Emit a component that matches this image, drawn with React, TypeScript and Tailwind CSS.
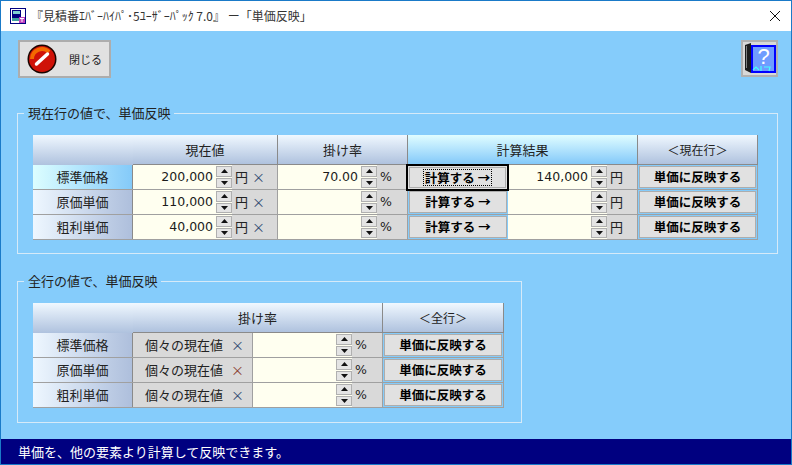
const HEAD = "bg-linear-to-b from-[#f0f8ff] to-[#afc2de]";
const HEAD_ACTIVE = "bg-linear-to-b from-[#e0fdff] to-[#83c9f9]";
const NUM_FONT = "font-['DejaVu_Sans','Noto_Sans_CJK_JP',sans-serif] text-[12.5px]";

const ROWS = [
  { name: "標準価格", price: "200,000", rate: "70.00", result: "140,000", active: true },
  { name: "原価単価", price: "110,000", rate: "", result: "", active: false },
  { name: "粗利単価", price: "40,000", rate: "", result: "", active: false },
];

function AppIcon() {
  return (
    <svg width="16" height="16" viewBox="0 0 16 16" className="shrink-0">
      <rect x="0.5" y="0.5" width="15" height="15" fill="#fff" stroke="#000080" />
      <rect x="2" y="2" width="9" height="8" fill="#000080" />
      <rect x="3" y="3" width="7" height="3" fill="#7fd0d0" />
      <rect x="2" y="10" width="9" height="3" fill="#40a0a0" />
      <rect x="9" y="9" width="6" height="6" fill="#c040c0" />
      <path d="M10 10.5h4M12 10.5v3.5" stroke="#fff" />
    </svg>
  );
}

function StopIcon() {
  return (
    <svg width="30" height="30" viewBox="0 0 30 30">
      <circle cx="15" cy="15" r="14.5" fill="#1a0500" />
      <circle cx="15" cy="15" r="13" fill="#cf1208" />
      <path d="M5 15a10 10 0 0 1 17-7" fill="none" stroke="#f46a00" strokeWidth="4" />
      <path d="M9.5 20 20.5 10" stroke="#fff" strokeWidth="3.5" strokeLinecap="round" />
    </svg>
  );
}

function HelpIcon() {
  return (
    <div className="flex h-[37px] w-[37px] items-center justify-center border-2 border-[#b0b0b0] bg-[#d8d8d8]">
      <svg width="33" height="33" viewBox="0 0 33 33">
        <path d="M2 3l6-2v30l-6-3z" fill="#1c1c1c" />
        <rect x="3" y="4" width="1" height="22" fill="#808080" />
        <rect x="8" y="3" width="25" height="28" fill="#0000ff" />
        <rect x="10" y="5" width="21" height="24" fill="#6f9cff" />
        <text x="20.5" y="22" textAnchor="middle" fontSize="22" fontFamily="Liberation Sans" fill="#fff">?</text>
        <path d="M10 28l3-3 3 3M18 24v5M21 25h6l-1 4" fill="none" stroke="#4ff" strokeWidth="1.2" />
      </svg>
    </div>
  );
}

function Spinner() {
  return (
    <div className="flex w-[16px] shrink-0 flex-col gap-px self-stretch py-px">
      {["up", "down"].map((dir) => (
        <div key={dir} className="flex flex-1 items-center justify-center border border-[#b0b0b0] bg-[#e4e4e4]">
          <svg width="7" height="4" viewBox="0 0 7 4">
            <path d={dir === "up" ? "M3.5 0 7 4H0z" : "M0 0h7L3.5 4z"} fill="#111" />
          </svg>
        </div>
      ))}
    </div>
  );
}

function NumberField({ value, width }: { value: string; width: string }) {
  return (
    <div className={`flex h-full shrink-0 items-center bg-[#fffff0] ${width}`}>
      <span className={`flex-1 pr-[3px] text-right text-[#1b1b1b] ${NUM_FONT}`}>{value}</span>
      <Spinner />
    </div>
  );
}

function ActionButton({ label, focused }: { label: string; focused?: boolean }) {
  if (focused) {
    return (
      <div className="z-10 -my-[2px] -ml-[2px] flex h-[27px] w-[103px] shrink-0 items-center justify-center border-2 border-black bg-[#e1e1e1] p-px">
        <div className="flex h-full w-full items-center justify-center border border-[#adadad]">
          <span className="border border-dotted border-black px-px text-[12.5px] leading-[15px] font-bold text-black">{label}</span>
        </div>
      </div>
    );
  }
  return (
    <div className="flex h-full flex-1 items-center justify-center bg-[#85ccfb] px-[1px] py-[1px]">
      <div className="flex h-full w-full items-center justify-center border border-[#adadad] bg-[#e1e1e1] text-[12.5px] font-bold text-black">
        {label}
      </div>
    </div>
  );
}

function RowLabel({ name, active }: { name: string; active?: boolean }) {
  return (
    <div
      className={`flex w-[100px] shrink-0 items-center justify-center border-r border-r-[#8a8a8a] text-[13px] text-[#222] ${
        active
          ? "bg-linear-to-r from-[#dcfeff] to-[#84caf9]"
          : "bg-linear-to-r from-[#eef7ff] to-[#aebfdc]"
      }`}
    >
      {name}
    </div>
  );
}

function CurrentRowTable() {
  return (
    <div className="w-[725px] text-[#222]">
      <div className="flex h-[30px] text-[13px]">
        <div className={`w-[100px] ${HEAD}`} />
        <div className={`flex w-[145px] items-center justify-center border-r border-b border-[#8a8a8a] ${HEAD}`}>現在値</div>
        <div className={`flex w-[130px] items-center justify-center border-r border-b border-[#8a8a8a] ${HEAD}`}>掛け率</div>
        <div className={`flex w-[230px] items-center justify-center border-r border-b border-[#8a8a8a] ${HEAD_ACTIVE}`}>計算結果</div>
        <div className={`flex w-[120px] items-center justify-center border-r border-b border-[#8a8a8a] text-[12px] ${HEAD}`}>＜現在行＞</div>
      </div>
      {ROWS.map((row) => (
        <div key={row.name} className="flex h-[25px] border-b border-[#a0a0a0]">
          <RowLabel name={row.name} active={row.active} />
          <div className="flex w-[145px] shrink-0 items-center border-r border-[#a0a0a0] bg-[#d9d9d9]">
            <NumberField value={row.price} width="w-[99px]" />
            <span className="w-[45px] pl-[3px] text-[13px] whitespace-nowrap">
              円<span className="ml-1 text-[#2f4a70]">×</span>
            </span>
          </div>
          <div className="flex w-[130px] shrink-0 items-center border-r border-[#a0a0a0] bg-[#d9d9d9]">
            <NumberField value={row.rate} width="w-[99px]" />
            <span className={`pl-[3px] ${NUM_FONT}`}>%</span>
          </div>
          <div className="flex w-[230px] shrink-0 items-center border-r border-[#a0a0a0] bg-[#d9d9d9]">
            <div className="flex h-full w-[100px] shrink-0 items-center">
              <ActionButton label="計算する →" focused={row.active} />
            </div>
            <NumberField value={row.result} width="w-[99px]" />
            <span className="pl-[3px] text-[13px]">円</span>
          </div>
          <div className="flex w-[120px] shrink-0 items-center border-r border-[#a0a0a0]">
            <ActionButton label="単価に反映する" />
          </div>
        </div>
      ))}
    </div>
  );
}

function AllRowsTable() {
  return (
    <div className="w-[471px] text-[#222]">
      <div className="flex h-[30px] text-[13px]">
        <div className={`w-[100px] ${HEAD}`} />
        <div className={`flex w-[250px] items-center justify-center border-r border-b border-[#8a8a8a] ${HEAD}`}>掛け率</div>
        <div className={`flex w-[121px] items-center justify-center border-r border-b border-[#8a8a8a] text-[12px] ${HEAD}`}>＜全行＞</div>
      </div>
      {ROWS.map((row, i) => (
        <div key={row.name} className="flex h-[25px] border-b border-[#a0a0a0]">
          <RowLabel name={row.name} />
          <div className="flex w-[250px] shrink-0 items-center border-r border-[#a0a0a0] bg-[#d9d9d9]">
            <span className="w-[120px] shrink-0 self-stretch border-r border-[#a0a0a0] pl-[12px] text-[13px] leading-[23px] whitespace-nowrap">
              個々の現在値<span className={`ml-[8px] ${i === 1 ? "text-[#8a4030]" : "text-[#2f4a70]"}`}>×</span>
            </span>
            <NumberField value="" width="w-[99px]" />
            <span className={`pl-[3px] ${NUM_FONT}`}>%</span>
          </div>
          <div className="flex w-[121px] shrink-0 items-center border-r border-[#a0a0a0]">
            <ActionButton label="単価に反映する" />
          </div>
        </div>
      ))}
    </div>
  );
}

function GroupBox({ title, width, children }: { title: string; width: string; children: React.ReactNode }) {
  return (
    <fieldset className={`border border-[#d6eaf8] ${width}`}>
      <legend className="ml-[6px] px-[4px] text-[13px] leading-[18px] text-[#222]">{title}</legend>
      <div className="pl-[15px]">{children}</div>
    </fieldset>
  );
}

export default function App() {
  return (
    <div className="flex h-[465px] w-[792px] flex-col overflow-hidden border border-[#1a7ac8] bg-[#85ccfb] font-['Noto_Sans_CJK_JP',sans-serif]">
      <header className="flex h-[30px] shrink-0 items-center bg-white pl-[9px]">
        <AppIcon />
        <span className="ml-[5px] flex-1 text-[12px] whitespace-nowrap text-[#333]">『見積番ｴﾊﾞｰﾊｲﾊﾟ･5ﾕｰｻﾞｰﾊﾟｯｸ 7.0』 ー「単価反映」</span>
        <svg width="12" height="12" viewBox="0 0 12 12" className="mr-[10px]">
          <path d="M1 1l10 10M11 1 1 11" stroke="#111" strokeWidth="1" />
        </svg>
      </header>

      <main className="flex flex-1 flex-col pt-[9px] pl-[16px]">
        <div className="flex items-start justify-between pr-[13px]">
          <button className="ml-px flex h-[38px] w-[93px] items-center border-2 border-[#adadad] bg-[#e1e1e1] pl-[7px] text-[11px] text-[#222]">
            <StopIcon />
            <span className="ml-[12px]">閉じる</span>
          </button>
          <HelpIcon />
        </div>

        <div className="mt-[26px]">
          <GroupBox title="現在行の値で、単価反映" width="w-[761px] h-[150px]">
            <div className="mt-[13px]">
              <CurrentRowTable />
            </div>
          </GroupBox>
        </div>

        <div className="mt-[18px]">
          <GroupBox title="全行の値で、単価反映" width="w-[505px] h-[151px]">
            <div className="mt-[13px]">
              <AllRowsTable />
            </div>
          </GroupBox>
        </div>
      </main>

      <footer className="flex h-[25px] shrink-0 items-center bg-[#000080] pl-[17px] text-[13px] text-white">
        単価を、他の要素より計算して反映できます。
      </footer>
    </div>
  );
}
